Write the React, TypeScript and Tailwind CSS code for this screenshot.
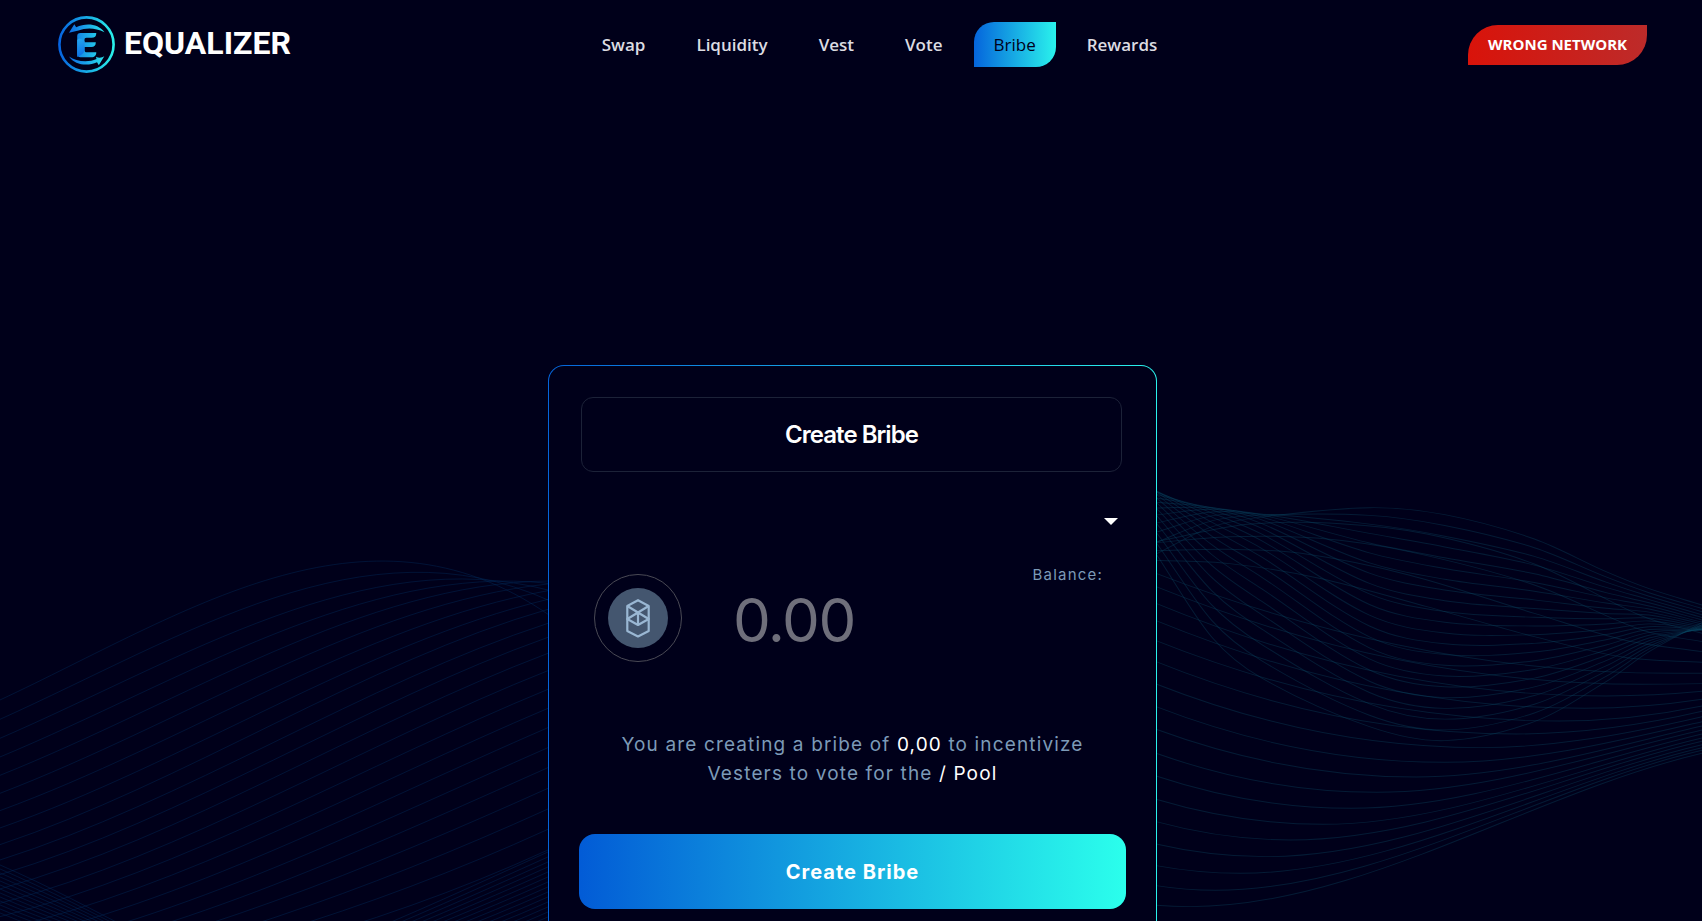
import { useState } from "react";

const navItems = ["Swap", "Liquidity", "Vest", "Vote", "Bribe", "Rewards"];

type Point = [number, number];

// Catmull-Rom spline through the points, written as cubic segments
function spline(points: Point[]) {
  let d = `M${points[0][0]} ${points[0][1]}`;
  for (let i = 0; i < points.length - 1; i++) {
    const p0 = points[Math.max(i - 1, 0)];
    const p1 = points[i];
    const p2 = points[i + 1];
    const p3 = points[Math.min(i + 2, points.length - 1)];
    const third = (p2[0] - p1[0]) / 3;
    const s1 = (p2[1] - p0[1]) / (p2[0] - p0[0]);
    const s2 = (p3[1] - p1[1]) / (p3[0] - p1[0]);
    d += `C${p1[0] + third} ${p1[1] + s1 * third} ${p2[0] - third} ${p2[1] - s2 * third} ${p2[0]} ${p2[1]}`;
  }
  return d;
}

// Single cubic with a given slope at each end
function curve([x1, y1]: Point, m1: number, [x2, y2]: Point, m2: number) {
  const third = (x2 - x1) / 3;
  return `M${x1} ${y1}C${x1 + third} ${y1 + m1 * third} ${x2 - third} ${y2 - m2 * third} ${x2} ${y2}`;
}

const leftStart = [600, 658, 715, 771, 826, 880, 932, 984, 1034, 1080, 1124, 1167, 1210, 1250, 1290, 1328, 1365, 1400, 1435, 1470, 1500, 1530];
const leftEnd = [343, 300, 270, 250, 243, 252, 272, 298, 328, 370, 412, 460, 512, 568, 625, 683, 743, 803, 865, 927, 988, 1050];

const leftWaves = [
  ...leftStart.map((y, i) =>
    curve([0, y], Math.min(-0.2, -0.5 + i * 0.018), [1535, leftEnd[i]], -0.5 + 1.24 * Math.exp(-i / 4.3)),
  ),
  ...Array.from({ length: 14 }, (_, i) => curve([950, 1330 + i * 12], -0.42, [1535, 1056 + i * 15], -0.48)),
  ...Array.from({ length: 13 }, (_, i) => curve([0, 1095 + i * 12], 0.46, [400, 1308 + i * 8], 0.56)),
];

// [start y, lowest x, lowest y, end y]
const bowls = [
  [310, 1490, 610, 610],
  [350, 1400, 643, 641],
  [400, 1300, 678, 664],
  [452, 1240, 715, 688],
  [512, 1170, 753, 708],
  [575, 1050, 792, 724],
  [642, 950, 833, 740],
  [710, 850, 877, 755],
  [778, 770, 921, 768],
  [850, 660, 967, 780],
  [918, 590, 1015, 792],
  [988, 510, 1063, 804],
  [1055, 420, 1110, 814],
  [1122, 350, 1160, 824],
  [1187, 280, 1210, 833],
  [1247, 210, 1261, 841],
  [1306, 140, 1310, 850],
];

const rightWaves = [
  ...Array.from({ length: 22 }, (_, i) => {
    const s = i / 21;
    return spline([
      [45, 62 + 760 * (s - 0.5) ** 2],
      [200, 112 + 750 * (s - 0.28) ** 2],
      [340, 132 + 636 * (s - 0.12) ** 2],
      [640, 113 + 657 * s ** 1.1],
      [850, 134 + 678 * s],
      [1100, 207 + 548 * s],
      [1300, 305 + 330 * s],
      [1420, 356 + 189 * s ** 0.9],
      [1568, 405 + 75 * (1 - ((s - 0.65) / 0.65) ** 2)],
    ]);
  }),
  spline([[45, 215], [300, 163], [560, 161], [800, 192], [1100, 282], [1400, 438], [1568, 490]]),
  spline([[45, 218], [250, 200], [500, 205], [750, 245], [1100, 345], [1400, 480], [1568, 515]]),
  spline([[45, 242], [250, 238], [450, 250], [750, 315], [1100, 430], [1350, 510], [1568, 545]]),
  spline([[45, 271], [250, 281], [500, 325], [800, 410], [1100, 500], [1350, 562], [1568, 577]]),
  ...bowls.map(([y, mx, my, end]) => {
    const m1 = (2 * (my - y)) / (mx - 45);
    const m2 = Math.min(0.25, (2 * (my - end)) / (1568 - mx));
    return curve([45, y], m1, [mx, my], 0) + curve([mx, my], 0, [1568, end], -m2);
  }),
];

function WaveBackground() {
  return (
    <svg
      aria-hidden="true"
      viewBox="0 0 1702 921"
      preserveAspectRatio="xMidYMid slice"
      className="pointer-events-none absolute inset-0 h-full w-full"
      fill="none"
    >
      <g transform="translate(0 500) scale(.357 .3333)" stroke="#003060" strokeOpacity=".42" strokeWidth="2.8">
        {leftWaves.map((d, i) => (
          <path key={i} d={d} />
        ))}
      </g>
      <g transform="translate(1140 470) scale(.3585 .3333)" stroke="#0b4a66" strokeOpacity=".36" strokeWidth="2.8">
        {rightWaves.map((d, i) => (
          <path key={i} d={d} />
        ))}
      </g>
    </svg>
  );
}

function LogoMark() {
  return (
    <svg viewBox="0 0 57 57" className="h-[57px] w-[57px]" fill="none" aria-hidden="true">
      <defs>
        <linearGradient id="ring" x1="0" y1="0" x2="57" y2="0" gradientUnits="userSpaceOnUse">
          <stop stopColor="#0560e0" />
          <stop offset="1" stopColor="#2af5ea" />
        </linearGradient>
        <linearGradient id="mark" x1="10" y1="0" x2="48" y2="0" gradientUnits="userSpaceOnUse">
          <stop stopColor="#0b66e4" />
          <stop offset="1" stopColor="#2ce8ec" />
        </linearGradient>
        <linearGradient id="fold" x1="19" y1="18" x2="27" y2="40" gradientUnits="userSpaceOnUse">
          <stop stopColor="#2bb4f0" />
          <stop offset="1" stopColor="#0b6ee6" />
        </linearGradient>
      </defs>
      <circle cx="28.500" cy="28.500" r="27.100" stroke="url(#ring)" strokeWidth="2.600" />
      <path
        d="M11 16.700L16.300 8.300L18.200 11.300C28 6.800 40 7.500 46.500 16.200C37 11.300 27.500 11.500 20.500 14.600Z"
        fill="url(#mark)"
      />
      <path
        d="M11 40.500C18 45.500 30 46.800 38.500 43L38 40.800C41 42.200 44 41.800 46.300 40.200L40.800 49.300L39 46.300C30 50.300 17 49.500 11 40.500Z"
        fill="url(#mark)"
      />
      <path
        d="M22.500 17H38.300C38.300 20.300 36.800 21.800 33.500 21.800H28.500C27 21.800 26.500 22.500 26.500 24V26.300H37.800C37.800 29.600 36.300 31 33.300 31H26.500V33.500C26.500 35.500 27.200 36.300 29 36.300H38.300C38.300 39.800 36.500 41.300 33.500 41.300H22.500C20.300 41.300 19.200 40 19.200 37.800V20.300C19.200 18 20.300 17 22.500 17Z"
        fill="url(#mark)"
      />
      <path d="M19.200 24C21 21.800 24 22.400 26.500 25.200V33.500C26.500 35.500 26 37 23 39L19.200 41V24Z" fill="url(#fold)" />
    </svg>
  );
}

function Header({ active, onSelect }: { active: string; onSelect: (item: string) => void }) {
  return (
    <header className="relative flex items-center justify-between pt-4 pr-[55px] pl-[58px]">
      <a href="#" aria-label="Equalizer" className="flex items-center gap-[9px]">
        <LogoMark />
        <span className="pb-1 font-[Roboto,sans-serif] text-[32px] leading-none font-bold text-white">EQUALIZER</span>
      </a>

      <nav className="flex items-center gap-[11px]">
        {navItems.map((item) => (
          <a
            key={item}
            href={`#${item.toLowerCase()}`}
            onClick={() => onSelect(item)}
            className={
              item === active
                ? "rounded-tl-[20px] rounded-br-[20px] bg-linear-to-r/srgb from-[#0565dc] to-[#2af2ec] px-5 py-[10px] text-[17px] leading-[25px] font-medium text-[#00001a]"
                : "px-5 py-[10px] text-[17px] leading-[25px] font-semibold text-[#dcdce2]"
            }
          >
            {item}
          </a>
        ))}
      </nav>

      <button
        type="button"
        className="h-10 rounded-tl-[30px] rounded-br-[30px] bg-linear-to-r/srgb from-[#d9130a] to-[#bd2b2a] px-5 text-[15px] font-bold text-white"
      >
        WRONG NETWORK
      </button>
    </header>
  );
}

function TokenIcon() {
  return (
    <div className="flex h-[88px] w-[88px] items-center justify-center rounded-full border border-[#4a4a55]">
      <svg viewBox="0 0 60 60" className="h-[60px] w-[60px]" fill="none" aria-hidden="true">
        <circle cx="30" cy="30" r="30" fill="#44566f" />
        <g stroke="#9ab7d3" strokeWidth="2.200" strokeLinejoin="round">
          <path d="M30 12.200L40.700 18V43L30 48.500L19.300 43V18Z" />
          <path d="M19.300 18L40.700 31L30 37L19.300 31L40.700 18M30 24.500V37" />
        </g>
      </svg>
    </div>
  );
}

export default function App() {
  const [active, setActive] = useState("Bribe");
  const [amount, setAmount] = useState("");

  return (
    <div className="relative h-screen overflow-hidden bg-[#00001a] font-['Open_Sans',sans-serif]">
      <WaveBackground />
      <Header active={active} onSelect={setActive} />

      <main className="relative mt-[292px] flex justify-center pl-[3px] font-[Inter,sans-serif]">
        <div className="w-full max-w-[609px] rounded-2xl bg-linear-to-r/srgb from-[#0565dc] to-[#2af2ec] p-px">
          <section className="rounded-[15px] bg-[#00001a] px-[30px] pt-[31px] pb-8">
            <h1 className="mr-1 ml-[2px] flex h-[75px] items-center justify-center rounded-xl border border-[#1c2238] text-2xl font-semibold tracking-[-0.04em] text-white">
              Create Bribe
            </h1>

            <button type="button" aria-label="Select pool" className="mt-[31px] flex h-9 w-full items-center justify-end pr-2">
              <svg viewBox="0 0 14 7" className="h-[7px] w-[14px]" fill="#fff" aria-hidden="true">
                <path d="M0 0H14L7 7Z" />
              </svg>
            </button>

            <div className="mt-7 flex items-start px-[15px]">
              <div className="mt-[7px]">
                <TokenIcon />
              </div>
              <label className="ml-[51px] flex flex-1 pt-[13px]">
                <span className="sr-only">Bribe amount</span>
                <input
                  value={amount}
                  onChange={(event) => setAmount(event.target.value)}
                  placeholder="0.00"
                  className="h-20 w-full min-w-0 bg-transparent text-6xl tracking-tight text-white outline-none placeholder:text-[#6f6f7b]"
                />
              </label>
              <p className="pr-2 text-[15px] leading-4 tracking-[0.08em] text-[#7c9ab7]">Balance:</p>
            </div>

            <p className="mx-auto mt-[68px] max-w-[480px] text-center text-[19px] leading-[29px] tracking-[0.06em] text-[#7c9ab7]">
              You are creating a bribe of <span className="text-white">0,00</span> to incentivize Vesters to vote for the{" "}
              <span className="text-white">/ Pool</span>
            </p>

            <button
              type="button"
              className="mt-[46px] h-[75px] w-full rounded-2xl bg-linear-to-r/srgb from-[#025bd6] to-[#2bffec] text-[20px] font-bold tracking-wider text-white"
            >
              Create Bribe
            </button>
          </section>
        </div>
      </main>
    </div>
  );
}
